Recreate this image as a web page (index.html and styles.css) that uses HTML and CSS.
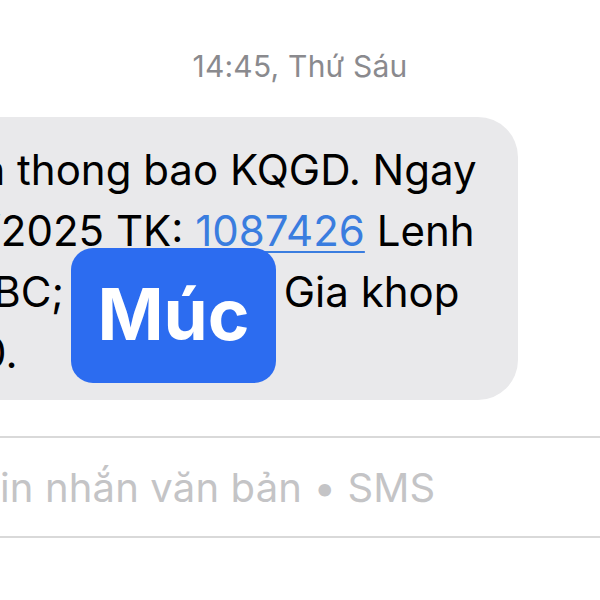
FILE: index.html
```html
<!DOCTYPE html>
<html lang="vi">
  <head>
    <meta charset="UTF-8" />
    <meta name="viewport" content="width=device-width, initial-scale=1.0" />
    <title>Tin nhắn</title>
    <link rel="stylesheet" href="styles.css">
  </head>
  <body>
    <div class="thread">
      <p class="stamp">14:45, Thứ Sáu</p>

      <div class="row">
        <div class="bubble">
          <p class="msg">
            <span class="line">VCI xin thong bao KQGD. Ngay</span>
            <span class="line">05/09/2025 TK: <a class="link" href="#">1087426</a> Lenh</span>
            <span class="line">Mua ABC; KL: 1,000; Gia khop</span>
            <span class="line">25,000.</span>
          </p>
          <div class="tag">Múc</div>
        </div>
      </div>

      <div class="compose">
        <span class="placeholder">Tin nhắn văn bản • SMS</span>
      </div>
    </div>
  </body>
</html>
```

FILE: styles.css
```css
html, body {
  margin: 0;
  background: #ffffff;
  overflow: hidden;
}

body {
  font-family: Inter, "Noto Sans", sans-serif;
  width: 600px;
  height: 600px;
}

* {
  margin: 0;
  box-sizing: border-box;
}

.thread {
  display: flex;
  flex-direction: column;
  padding-top: 48px;
}

.stamp {
  text-align: center;
  font-size: 30px;
  line-height: 36px;
  color: #8a8a8e;
  letter-spacing: 0.2px;
}

.row {
  display: flex;
  margin-top: 33px;
}

/* bubble runs off the left edge, like the zoomed photo */
.bubble {
  position: relative;
  flex: none;
  width: 818px;
  margin-left: -300px;
  padding: 22px 0 17px 166px;
  background: #e9e9eb;
  border-radius: 40px;
}

.msg {
  font-size: 42px;
  line-height: 61px;
  color: #000000;
  white-space: nowrap;
}

.line {
  display: block;
}

.link {
  color: #3a7ddf;
  text-decoration: underline;
  text-decoration-thickness: 2px;
  text-underline-offset: 5px;
}

.tag {
  position: absolute;
  left: 371px;
  top: 131px;
  width: 205px;
  height: 135px;
  display: flex;
  align-items: center;
  justify-content: center;
  background: #2c6cf0;
  border-radius: 22px;
  color: #ffffff;
  font-weight: 700;
  font-size: 71px;
  padding-bottom: 4px;
}

.compose {
  margin-top: 36px;
  margin-left: -40px;
  width: 700px;
  height: 102px;
  border-top: 2px solid #d9d9d9;
  border-bottom: 2px solid #d9d9d9;
  display: flex;
  align-items: center;
  padding-left: 14px;
}

.placeholder {
  font-size: 40px;
  color: #c4c4c6;
  letter-spacing: 0.15px;
}
```
